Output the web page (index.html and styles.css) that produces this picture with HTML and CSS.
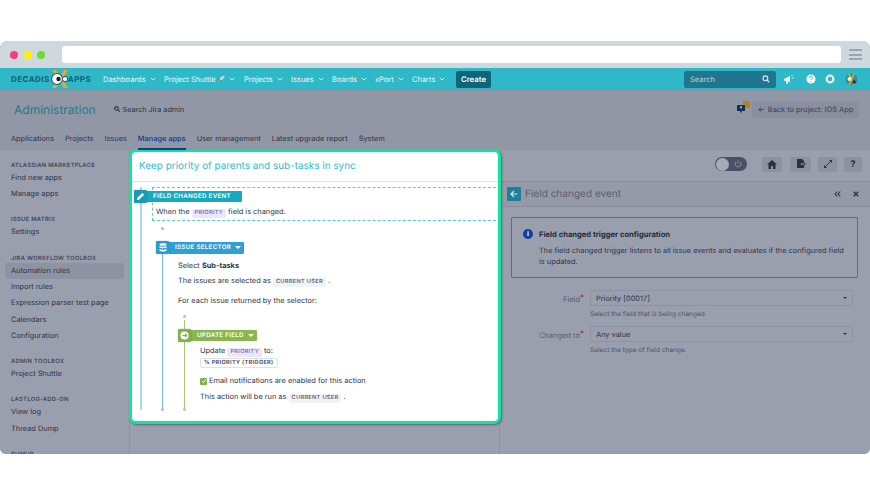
FILE: index.html
```html
<!DOCTYPE html>
<html lang="en">
<head>
<meta charset="utf-8">
<title>Automation rules</title>
<link rel="stylesheet" href="styles.css">
</head>
<body>
<div class="window">
  <div class="chrome">
    <span class="dot dot-red"></span><span class="dot dot-yellow"></span><span class="dot dot-green"></span>
    <div class="url"></div>
    <div class="burger"><i></i><i></i><i></i></div>
  </div>
  <nav class="nav">
    <div class="logo"><span>DECADIS</span>
      <svg class="logo-mark" width="22" height="18" viewBox="0 0 22 18"><path d="M3 0h4l4 6 4-6h4l-6 9 6 9h-4l-4-6-4 6H3l6-9z" fill="#e6a92e"/><circle cx="8" cy="9" r="5.5" fill="#fff" stroke="#0f5d72" stroke-width="1.2"/><circle cx="9.500" cy="9" r="2.200" fill="#123"/><circle cx="16" cy="9" r="2.600" fill="#fff" stroke="#0f5d72"/></svg>
      <span>APPS</span></div>
    <ul class="menu">
      <li class="menu-item m1">Dashboards<svg class="chev" viewBox="0 0 8 5"><path d="M1 1l3 3 3-3" /></svg></li>
      <li class="menu-item m2">Project Shuttle <svg class="rocket" viewBox="0 0 10 10"><path d="M9.500.5C6 1 4 3 3 5l2 2c2-1 4-3 4.500-6.500z" fill="#c9d3dc"/><path d="M3 4L.5 5.500 2.500 6zM6 7L4.500 9.500 4 7.500z" fill="#b8503a"/><path d="M2.500 7L1 9.500 3.500 8z" fill="#e6a92e"/></svg><svg class="chev" viewBox="0 0 8 5"><path d="M1 1l3 3 3-3" /></svg></li>
      <li class="menu-item m3">Projects<svg class="chev" viewBox="0 0 8 5"><path d="M1 1l3 3 3-3" /></svg></li>
      <li class="menu-item m4">Issues<svg class="chev" viewBox="0 0 8 5"><path d="M1 1l3 3 3-3" /></svg></li>
      <li class="menu-item m5">Boards<svg class="chev" viewBox="0 0 8 5"><path d="M1 1l3 3 3-3" /></svg></li>
      <li class="menu-item m6">xPort<svg class="chev" viewBox="0 0 8 5"><path d="M1 1l3 3 3-3" /></svg></li>
      <li class="menu-item m7">Charts<svg class="chev" viewBox="0 0 8 5"><path d="M1 1l3 3 3-3" /></svg></li>
    </ul>
    <button class="create">Create</button>
    <div class="nav-right">
      <div class="search"><span>Search</span>
        <svg class="ico" width="8" height="8" viewBox="0 0 10 10"><circle cx="4.200" cy="4.200" r="3" fill="none" stroke="#d5e6ea" stroke-width="1.500"/><path d="M6.500 6.500L9 9" stroke="#d5e6ea" stroke-width="1.600"/></svg></div>
      <svg class="nav-ico" width="11" height="11" viewBox="0 0 11 11"><path d="M1 5l6-3v6l-6-1.500z" fill="#fff"/><path d="M3 7l.8 3h1.400L4.500 7z" fill="#fff"/><path d="M8.500 4h2M8.500 2l1-1" stroke="#fff" stroke-width=".8"/></svg>
      <svg class="nav-ico ni-help" width="10" height="10" viewBox="0 0 10 10"><circle cx="5" cy="5" r="4.500" fill="#fff"/><path d="M3.500 4c0-2 3-2 3 0 0 1-1.500 1-1.500 2" fill="none" stroke="#2fb9c8" stroke-width="1"/><circle cx="5" cy="7.500" r=".6" fill="#2fb9c8"/></svg>
      <svg class="nav-ico ni-gear" width="10" height="10" viewBox="0 0 10 10"><circle cx="5" cy="5" r="3.400" fill="none" stroke="#fff" stroke-width="2"/></svg>
      <svg class="nav-ico ni-user" width="13" height="13" viewBox="0 0 13 13"><circle cx="6.500" cy="6.500" r="6" fill="#2f8f9e"/><path d="M4 1l5 11M9 1L4 12" stroke="#e6a92e" stroke-width="1.600"/><circle cx="4.500" cy="6" r="2" fill="#e8f0f2"/><circle cx="9" cy="9" r="1.800" fill="#12394a"/></svg>
    </div>
  </nav>
  <header class="admin">
    <div class="admin-top">
      <h1 class="admin-title">Administration</h1>
      <div class="admin-search"><svg width="6" height="6" viewBox="0 0 10 10"><circle cx="4" cy="4" r="3" fill="none" stroke="#2e3346" stroke-width="1.800"/><path d="M6.500 6.500L9.500 9.500" stroke="#2e3346" stroke-width="1.800"/></svg>Search Jira admin</div>
      <svg class="feedback" width="13" height="13" viewBox="0 0 13 13"><rect x="6" y="0" width="7" height="7" fill="#b8860f"/><path d="M0 4h8v6H5l-1 2.500L3 10H0z" fill="#12305f"/><rect x="3.500" y="5" width="1" height="2.500" fill="#fff"/></svg>
      <button class="back"><span class="back-arrow">←</span>Back to project: IOS App</button>
    </div>
    <div class="tabs">
      <a class="tab">Applications</a><a class="tab">Projects</a><a class="tab">Issues</a><a class="tab tab-active">Manage apps</a><a class="tab">User management</a><a class="tab">Latest upgrade report</a><a class="tab">System</a>
    </div>
  </header>
  <div class="content">
    <aside class="side">
      <h4>ATLASSIAN MARKETPLACE</h4><a>Find new apps</a><a>Manage apps</a>
      <h4>ISSUE MATRIX</h4><a>Settings</a>
      <h4>JIRA WORKFLOW TOOLBOX</h4><a class="current">Automation rules</a><a>Import rules</a><a>Expression parser test page</a><a>Calendars</a><a>Configuration</a>
      <h4>ADMIN TOOLBOX</h4><a>Project Shuttle</a>
      <h4>LASTLOG-ADD-ON</h4><a>View log</a><a>Thread Dump</a>
      <h4>SUMUP</h4>
    </aside>
    <section class="center">
      <div class="card">
        <h2 class="card-title">Keep priority of parents and sub-tasks in sync</h2>
        <div class="flow">
          <div class="event">
            <div class="badge badge-event">
              <span class="b-icon"><svg width="9" height="9" viewBox="0 0 10 10"><path d="M1 9l.5-2.500L7 1l2 2-5.500 5.500z" fill="#fff"/></svg></span>
              <span class="b-label">FIELD CHANGED EVENT</span>
            </div>
            <div class="event-box">
              <p class="line">When the <span class="chip chip-purple">PRIORITY</span> field is changed.</p>
            </div>
            <i class="tick tick-a"></i>
            <div class="selector">
              <div class="badge badge-selector">
                <span class="b-icon"><svg width="8" height="9" viewBox="0 0 8 9"><ellipse cx="4" cy="1.500" rx="3.500" ry="1.300" fill="#fff"/><path d="M.5 3c1 1 6 1 7 0v1.500c-1 1-6 1-7 0zM.5 6c1 1 6 1 7 0v1.500c-1 1.300-6 1.300-7 0z" fill="#fff"/></svg></span>
                <span class="b-label">ISSUE SELECTOR<i class="caret"></i></span>
              </div>
              <div class="sel-body">
                <p class="line l-select">Select <b>Sub-tasks</b></p>
                <p class="line l-issues">The issues are selected as <span class="chip chip-grey">CURRENT USER</span> .</p>
                <p class="line l-each">For each issue returned by the selector:</p>
              </div>
              <i class="tick tick-b"></i>
              <div class="update">
                <div class="badge badge-update">
                  <span class="b-icon"><svg width="9" height="9" viewBox="0 0 10 10"><circle cx="5" cy="5" r="4.500" fill="#fff"/><path d="M2.500 5h5M5.500 3l2 2-2 2" fill="none" stroke="#7fb24a" stroke-width="1.200"/></svg></span>
                  <span class="b-label">UPDATE FIELD<i class="caret"></i></span>
                </div>
                <div class="upd-body">
                  <p class="line">Update <span class="chip chip-purple">PRIORITY</span> to:</p>
                  <span class="chip chip-outline">% PRIORITY (TRIGGER)</span>
                  <p class="line l-mail"><span class="check"><svg width="6" height="6" viewBox="0 0 6 6"><path d="M1 3l1.500 1.500L5 1.500" fill="none" stroke="#fff" stroke-width="1"/></svg></span>Email notifications are enabled for this action</p>
                  <p class="line l-run">This action will be run as <span class="chip chip-grey">CURRENT USER</span> .</p>
                </div>
              </div>
            </div>
          </div>
        </div>
      </div>
    </section>
    <section class="panel">
      <div class="tools">
        <div class="toggle"><span class="knob"></span><svg width="8" height="8" viewBox="0 0 8 8"><path d="M2 1.700a3 3 0 1 0 4 0" fill="none" stroke="#9aa0ae" stroke-width=".8"/><path d="M4 .5v3" stroke="#9aa0ae" stroke-width=".8"/></svg></div>
        <button class="tool t1"><svg width="10" height="9" viewBox="0 0 10 9"><path d="M5 0L0 4.500h1.500V9h2.500V6h2v3h2.500V4.500H10z" fill="#2b3044"/></svg></button>
        <button class="tool t2"><svg width="10" height="10" viewBox="0 0 10 10"><path d="M1 0h5l2 2v2H5v2h3v3H1z" fill="#2b3044"/><path d="M6 5h3M8 3.800L9.500 5 8 6.200" stroke="#2b3044" fill="none" stroke-width=".8"/></svg></button>
        <button class="tool t3"><svg width="8" height="8" viewBox="0 0 8 8"><path d="M5 0h3v3zM0 8V5l3 3z" fill="#2b3044"/><path d="M6.500 1.500l-5 5" stroke="#2b3044"/></svg></button>
        <button class="tool t4">?</button>
      </div>
      <div class="panel-head">
        <span class="back-square"><svg width="8" height="8" viewBox="0 0 8 8"><path d="M7.500 4H1M4 1L1 4l3 3" fill="none" stroke="#d4e8ec" stroke-width="1.200"/></svg></span>
        <h3 class="panel-title">Field changed event</h3>
        <svg class="ph-a" width="7" height="6" viewBox="0 0 7 6"><path d="M3.300.5L1 3l2.300 2.500M6.300.5L4 3l2.300 2.500" fill="none" stroke="#2b3044" stroke-width="1.100"/></svg>
        <svg class="ph-b" width="6" height="6" viewBox="0 0 6 6"><path d="M.7.7l4.600 4.600M5.300.7L.7 5.300" stroke="#2b3044" stroke-width="1.300"/></svg>
      </div>
      <div class="info">
        <span class="info-ico">i</span>
        <div>
          <p class="info-title">Field changed trigger configuration</p>
          <p class="info-text">The field changed trigger listens to all issue events and evaluates if the configured field is updated.</p>
        </div>
      </div>
      <form class="form">
        <div class="row"><label>Field<em>*</em></label><div class="select">Priority [00017]<i class="sel-caret"></i></div></div>
        <p class="hint">Select the field that is being changed.</p>
        <div class="row"><label>Changed to<em>*</em></label><div class="select">Any value<i class="sel-caret"></i></div></div>
        <p class="hint">Select the type of field change.</p>
      </form>
    </section>
  </div>
</div>
</body>
</html>
```

FILE: styles.css
```css
* { box-sizing: border-box; }
html, body { margin: 0; padding: 0; background: #fff; }
body { width: 870px; height: 495px; overflow: hidden; padding-top: 41px; font-family: Inter, "Liberation Sans", sans-serif; font-size: 7.400px; color: #2e3346; text-rendering: geometricPrecision; }
p, h1, h2, h3, h4, ul { margin: 0; padding: 0; }
button { font-family: inherit; border: 0; padding: 0; text-rendering: geometricPrecision; }

.window { width: 870px; height: 413px; border-radius: 8px 8px 6px 6px; overflow: hidden; display: flex; flex-direction: column; background: #9a9fae; }

.chrome { height: 27px; flex: none; background: #cfd8dd; display: flex; align-items: center; padding-left: 10px; }
.dot { width: 8px; height: 8px; border-radius: 50%; margin-right: 5.5px; }
.dot-red { background: #fb3c7c; }
.dot-yellow { background: #fff200; }
.dot-green { background: #6fdc2c; }
.url { width: 779px; height: 17px; background: #fff; border-radius: 3px; margin-left: 11px; }
.burger { margin-left: 8px; width: 13px; display: flex; flex-direction: column; gap: 2.500px; }
.burger i { display: block; height: 2px; background: #9aa5ae; }

.nav { height: 22px; flex: none; background: #2fb9c8; display: flex; align-items: center; color: #e6f7f9; }
.logo { width: 103px; padding-left: 11px; display: flex; align-items: center; font-size: 8px; font-weight: 700; letter-spacing: .45px; color: #0f5d72; white-space: nowrap; }
.logo-mark { margin: 0 -3px 0 -1px; flex: none; }
.menu { list-style: none; display: flex; width: 353px; }
.menu-item { display: flex; align-items: center; font-size: 7.500px; white-space: nowrap; }
.m1 { width: 61px; } .m2 { width: 80px; } .m3 { width: 47px; } .m4 { width: 41px; } .m5 { width: 43px; } .m6 { width: 37px; } .m7 { width: 44px; }
.chev { width: 6px; height: 4px; margin-left: 4px; fill: none; stroke: #e6f7f9; stroke-width: 1.200; }
.rocket { width: 8px; height: 8px; margin-left: 1px; }
.create { width: 35px; height: 17px; background: #0e6478; color: #fff; border-radius: 2px; font-size: 7.800px; font-weight: 600; }
.nav-right { margin-left: 193px; display: flex; align-items: center; }
.search { width: 92px; height: 17px; background: #22758e; border-radius: 2px; display: flex; align-items: center; justify-content: space-between; padding: 0 6px; font-size: 7.500px; color: #b5d3da; margin-right: 7px; }
.ni-help { margin-left: 12px; }
.ni-gear { margin-left: 9px; }
.ni-user { margin-left: 10px; }

.admin { height: 60px; flex: none; background: #9297a6; display: flex; flex-direction: column; }
.admin-top { height: 40px; display: flex; align-items: center; padding: 0 11px 2px 14px; }
.admin-title { font-size: 12px; font-weight: 400; color: #1f7a8c; width: 100px; }
.admin-search { display: flex; align-items: center; gap: 2.500px; font-size: 7.250px; color: #2e3346; }
.feedback { margin-left: auto; margin-right: 2px; margin-top: -3px; }
.back { height: 17px; width: 107px; background: #8a8f9f; color: #3a3f52; border-radius: 2px; font-size: 7.400px; }
.back-arrow { margin-right: 3px; }
.tabs { height: 20px; display: flex; padding-left: 11px; gap: 11px; }
.tab { font-size: 7.400px; line-height: 17px; color: #2e3346; white-space: nowrap; height: 20px; }
.tab-active { color: #0b3a92; font-weight: 500; border-bottom: 2px solid #0b3a92; }

.content { flex: 1; min-height: 0; display: flex; overflow: hidden; }
.side { width: 130px; flex: none; background: #9a9fae; border-right: 1px solid #8c91a0; padding: 10px 5px 0; overflow: hidden; }
.side h4 { font-size: 5.800px; font-weight: 600; letter-spacing: .3px; color: #43485a; line-height: 9px; padding-top: 1px; margin: 11.900px 0 0 6px; white-space: nowrap; }
.side h4:first-child { margin-top: 0; }
.side a { display: block; font-size: 7.400px; line-height: 16.300px; color: #2e3346; padding-left: 6px; border-radius: 2px; white-space: nowrap; }
.side .current { background: #8e93a3; }

.center { width: 370px; flex: none; border-right: 1px solid #8c91a0; }
.card { width: 372px; height: 275px; margin: -1px 0 0 -1px; background: #fff; border: 3px solid #0fe6a0; border-radius: 7px; box-shadow: 1px 1px 2px rgba(40,44,60,.5); position: relative; overflow: hidden; }
.card-title { height: 30px; font-size: 9.930px; font-weight: 400; line-height: 29px; color: #2fbccf; padding-left: 7px; border-bottom: 1px solid #e2e2e2; white-space: nowrap; }

.line { font-size: 7.400px; line-height: 12px; color: #2e3346; white-space: nowrap; }
.chip { display: inline-block; font-size: 5.650px; font-weight: 500; letter-spacing: .3px; line-height: 9px; padding: 0 3px; border-radius: 2px; vertical-align: 0; }
.chip-purple { background: #ece8fb; color: #6a5bb8; }
.chip-grey { background: #f1f2f4; color: #4c5163; }
.chip-outline { border: 1px solid #dfe1e6; color: #3a3f52; font-weight: 600; line-height: 8px; }

.flow { padding-left: 8px; height: 229px; }
.event { position: relative; margin-top: 5px; height: 223px; border-left: 2px solid #a8dde8; padding-left: 10px; }
.badge { display: flex; align-items: center; position: absolute; color: #fff; font-size: 6.200px; font-weight: 600; letter-spacing: .3px; white-space: nowrap; }
.b-icon { width: 13px; height: 13px; display: flex; align-items: center; justify-content: center; border-radius: 1px; box-shadow: 0 0 2px rgba(0,0,0,.25); position: relative; z-index: 1; }
.b-label { height: 11px; display: flex; align-items: center; padding: 0 6px; border-radius: 0 1px 1px 0; }
.caret { display: inline-block; margin-left: 4px; border: 3px solid transparent; border-top-color: #fff; border-bottom: 0; }

.badge-event { left: -8px; top: 3px; }
.badge-event .b-icon { background: #1a9bb3; }
.badge-event .b-label { width: 95px; background: #17a9c0; }
.event-box { height: 34px; margin-right: -3px; border: 1px dashed #5fc6d6; border-right: 0; padding: 18px 0 0 3px; }
.tick { display: block; width: 3px; height: 3px; border-radius: 50%; background: #b9bdc8; }
.tick-a { margin: 6px 0 0 9px; }

.selector { position: relative; margin: 11px 0 0 10px; height: 169px; border-left: 1px solid #73bce4; padding-left: 15px; }
.selector::after, .update::after { content: ""; position: absolute; left: -2px; bottom: -1px; width: 3px; height: 3px; border-radius: 50%; background: #b9bdc8; }
.badge-selector { left: -7px; top: 0; }
.badge-selector .b-icon { background: #2b9bd0; }
.badge-selector .b-label { width: 75px; height: 12px; background: #2f9fd6; padding-left: 6px; }
.sel-body { padding-top: 19px; }
.l-issues { margin-top: 3px; }
.l-each { margin-top: 8px; }
.tick-b { margin: 8px 0 0 5px; }

.update { position: relative; margin: 11px 0 0 6px; height: 81px; border-left: 1px solid #a3cb72; padding-left: 15px; }
.update::before { content: ""; position: absolute; left: -1px; top: -9px; width: 1px; height: 9px; background: #a3cb72; }
.badge-update { left: -7px; top: 0; }
.badge-update .b-icon { background: #7fb24a; }
.badge-update .b-label { width: 66px; background: #86b84e; padding-left: 6px; }
.upd-body { padding-top: 16px; }
.upd-body .chip-outline { display: inline-block; margin-top: 1px; }
.l-mail { margin-top: 7px; display: flex; align-items: center; }
.check { width: 7px; height: 7px; background: #7fb24a; border-radius: 1px; display: flex; align-items: center; justify-content: center; margin-right: 2px; }
.l-run { margin-top: 4px; }

.panel { flex: 1; min-width: 0; background: #9a9fae; }
.tools { height: 32px; display: flex; align-items: center; padding-bottom: 3px; border-bottom: 1px solid #8a8f9e; padding-left: 215px; }
.toggle { width: 32px; height: 14px; border-radius: 7px; background: #4b5164; display: flex; align-items: center; justify-content: space-between; padding: 0 5px 0 0; }
.knob { width: 13px; height: 13px; border-radius: 50%; background: #a7abb8; margin-left: .5px; }
.tool { height: 15px; width: 20px; background: #8d92a1; border-radius: 2px; display: flex; align-items: center; justify-content: center; color: #2b3044; font-weight: 700; font-size: 9px; }
.t1 { margin-left: 15px; }
.t2 { margin-left: 8px; width: 21px; }
.t3 { margin-left: 7px; width: 19px; }
.t4 { margin-left: 7px; width: 18px; }

.panel-head { height: 25px; display: flex; align-items: center; background: #959aa9; border-bottom: 1px solid #8a8f9e; padding-left: 7px; }
.back-square { width: 14px; height: 14px; border-radius: 1px; background: #1e7f96; display: flex; align-items: center; justify-content: center; }
.panel-title { font-size: 10.050px; font-weight: 400; color: #5b6070; margin-left: 4px; }
.ph-a { margin-left: auto; }
.ph-b { margin-left: 12px; margin-right: 11px; }

.info { width: 347px; height: 61px; margin: 10px 0 0 11px; border: 1px solid #4a6ea8; border-radius: 1px; display: flex; padding: 11px 10px 0 11px; gap: 6px; }
.info-ico { width: 10px; height: 10px; flex: none; border-radius: 50%; background: #123f9e; color: #fff; font-size: 7px; font-weight: 700; text-align: center; line-height: 10px; }
.info-title { font-size: 7.600px; font-weight: 700; line-height: 11px; color: #252a3c; }
.info-text { font-size: 7.400px; line-height: 11px; color: #2e3346; margin-top: 5px; }

.form { margin-top: 12px; }
.row { display: flex; align-items: center; }
.row label { width: 84px; text-align: right; font-size: 7.500px; color: #5b6070; padding-right: 0; }
.row em { color: #a01c2c; font-style: normal; font-size: 8px; vertical-align: 2px; }
.select { width: 263px; height: 16px; margin-left: 6px; border: 1px solid #8e93a2; background: #9a9fae; display: flex; align-items: center; justify-content: space-between; padding: 0 5px; font-size: 7.400px; color: #2e3346; }
.sel-caret { border: 2.500px solid transparent; border-top-color: #2e3346; border-bottom: 0; }
.hint { margin: 2px 0 0 90px; height: 18px; font-size: 6.550px; line-height: 12px; color: #4f5466; }
```
